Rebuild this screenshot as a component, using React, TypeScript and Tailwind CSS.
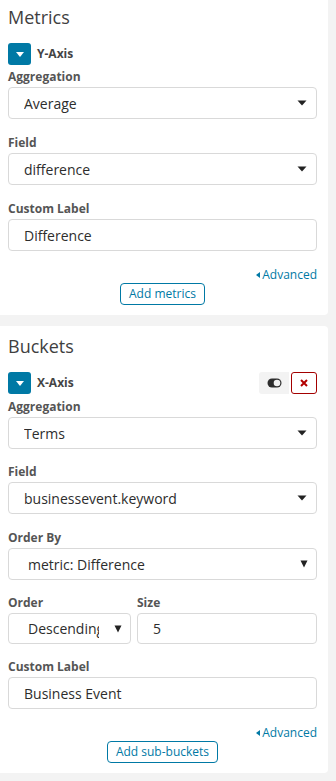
import React from "react";

const font = { fontFamily: '"Open Sans", "Liberation Sans", sans-serif' };

function Caret() {
  return (
    <svg width="10" height="6" viewBox="0 0 10 6" className="shrink-0">
      <path d="M0.5 0.5h9L5 5.5z" fill="#222" />
    </svg>
  );
}

function NativeCaret() {
  return (
    <svg width="8" height="8" viewBox="0 0 8 8" className="shrink-0">
      <path d="M0.5 0.5h7L4 7.5z" fill="#222" />
    </svg>
  );
}

function Label({ children }: { children: React.ReactNode }) {
  return <div className="mb-[3px] text-[12px] font-bold leading-[14px] text-[#555]">{children}</div>;
}

function Select({ value, native = false }: { value: string; native?: boolean }) {
  return (
    <div
      className={`flex h-[32px] items-center justify-between rounded-[4px] border border-[#d9d9d9] bg-white ${
        native ? "pl-[19px] pr-[8px]" : "pl-[15px] pr-[9px]"
      } text-[14px] text-[#2d2d2d]`}
    >
      <span className="truncate">{value}</span>
      {native ? <NativeCaret /> : <Caret />}
    </div>
  );
}

function Input({ value }: { value: string }) {
  return (
    <div className="flex h-[32px] items-center rounded-[4px] border border-[#d9d9d9] bg-white pl-[15px] text-[14px] text-[#2d2d2d]">
      {value}
    </div>
  );
}

function AxisHeader({ name, actions = false }: { name: string; actions?: boolean }) {
  return (
    <div className="flex h-[22px] items-center justify-between">
      <div className="flex items-center gap-[6px]">
        <div className="flex h-[22px] w-[23px] items-center justify-center rounded-[3px] bg-[#0079a5]">
          <svg width="8" height="5" viewBox="0 0 8 5">
            <path d="M0 0h8L4 5z" fill="#fff" />
          </svg>
        </div>
        <span className="text-[12px] font-bold text-[#444]">{name}</span>
      </div>
      {actions && (
        <div className="flex items-center gap-[2px]">
          <div className="flex h-[22px] w-[30px] items-center justify-center rounded-l-[3px] bg-[#f3f3f3]">
            <svg width="15" height="10" viewBox="0 0 15 10">
              <rect x="0.5" y="0.5" width="14" height="9" rx="4.5" fill="#2d2d2d" />
              <circle cx="10" cy="5" r="3.3" fill="#f3f3f3" />
            </svg>
          </div>
          <div className="flex h-[22px] w-[26px] items-center justify-center rounded-[3px] border border-[#a30000] bg-white">
            <svg width="8" height="8" viewBox="0 0 8 8">
              <path d="M1 1l6 6M7 1l-6 6" stroke="#b30000" strokeWidth="2" />
            </svg>
          </div>
        </div>
      )}
    </div>
  );
}

function Advanced() {
  return (
    <div className="flex h-[16px] items-center justify-end gap-[2px] text-[12px] leading-[16px] text-[#0079a5]">
      <svg width="4" height="6" viewBox="0 0 4 6">
        <path d="M4 0v6L0 3z" fill="#0079a5" />
      </svg>
      <span>Advanced</span>
    </div>
  );
}

function AddButton({ text }: { text: string }) {
  return (
    <div className="flex justify-center">
      <div className="flex h-[22px] items-center rounded-[4px] border border-[#0079a5] px-[8px] text-[12px] text-[#0079a5]">
        {text}
      </div>
    </div>
  );
}

export default function App() {
  return (
    <div style={font} className="min-h-[781px] w-[336px] bg-[#f3f3f3] pr-[8px]">
      <section className="rounded-br-[4px] bg-white pb-[10px] pl-[8px] pr-[11px]">
        <h2 className="pt-[3px] text-[18px] leading-[28px] text-[#3f3f3f]">Metrics</h2>
        <div className="mt-[12px]">
          <AxisHeader name="Y-Axis" />
        </div>
        <div className="mt-[5px]">
          <Label>Aggregation</Label>
          <Select value="Average" />
        </div>
        <div className="mt-[17px]">
          <Label>Field</Label>
          <Select value="difference" />
        </div>
        <div className="mt-[17px]">
          <Label>Custom Label</Label>
          <Input value="Difference" />
        </div>
        <div className="mt-[16px]">
          <Advanced />
        </div>
        <AddButton text="Add metrics" />
      </section>

      <section className="mt-[11px] rounded-r-[4px] bg-white pb-[10px] pl-[8px] pr-[11px]">
        <h2 className="pt-[6px] text-[18px] leading-[28px] text-[#3f3f3f]">Buckets</h2>
        <div className="mt-[12px]">
          <AxisHeader name="X-Axis" actions />
        </div>
        <div className="mt-[6px]">
          <Label>Aggregation</Label>
          <Select value="Terms" />
        </div>
        <div className="mt-[16px]">
          <Label>Field</Label>
          <Select value="businessevent.keyword" />
        </div>
        <div className="mt-[17px]">
          <Label>Order By</Label>
          <Select value="metric: Difference" native />
        </div>
        <div className="mt-[16px] flex gap-[6px]">
          <div className="w-[123px]">
            <Label>Order</Label>
            <div className="flex h-[31px] items-center justify-between rounded-[4px] border border-[#d9d9d9] bg-white pl-[19px] pr-[8px] text-[14px] text-[#2d2d2d]">
              <span className="w-[71px] overflow-hidden whitespace-nowrap">Descending</span>
              <NativeCaret />
            </div>
          </div>
          <div className="flex-1">
            <Label>Size</Label>
            <div className="flex h-[31px] items-center rounded-[4px] border border-[#d9d9d9] bg-white pl-[15px] text-[14px] text-[#2d2d2d]">
              5
            </div>
          </div>
        </div>
        <div className="mt-[16px]">
          <Label>Custom Label</Label>
          <Input value="Business Event" />
        </div>
        <div className="mt-[16px]">
          <Advanced />
        </div>
        <AddButton text="Add sub-buckets" />
      </section>
    </div>
  );
}
